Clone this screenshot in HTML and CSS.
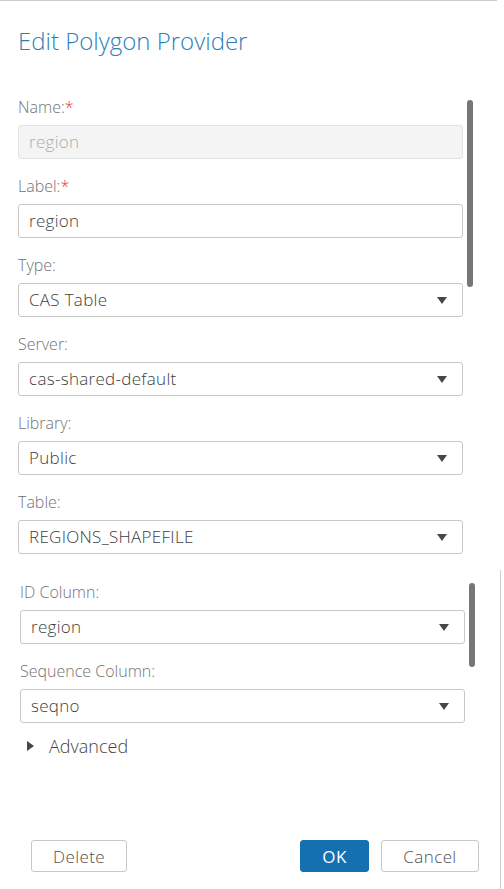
FILE: index.html
```html
<!DOCTYPE html>
<html>
<head>
<meta charset="utf-8">
<link rel="stylesheet" href="styles.css">
</head>
<body>
<div class="dialog">
  <h1 class="title">Edit Polygon Provider</h1>
  <div class="scroll-area">
    <div class="fields">
      <div class="field">
        <div class="label">Name:<span class="req">*</span></div>
        <div class="input disabled">region</div>
      </div>
      <div class="field">
        <div class="label">Label:<span class="req">*</span></div>
        <div class="input">region</div>
      </div>
      <div class="field">
        <div class="label">Type:</div>
        <div class="input select"><span>CAS Table</span><span class="arrow"></span></div>
      </div>
      <div class="field">
        <div class="label">Server:</div>
        <div class="input select"><span>cas-shared-default</span><span class="arrow"></span></div>
      </div>
      <div class="field">
        <div class="label">Library:</div>
        <div class="input select"><span>Public</span><span class="arrow"></span></div>
      </div>
      <div class="field last">
        <div class="label">Table:</div>
        <div class="input select"><span>REGIONS_SHAPEFILE</span><span class="arrow"></span></div>
      </div>
    </div>
    <div class="track"><div class="thumb thumb-main"></div></div>
  </div>
  <div class="lower">
    <div class="sub-panel">
      <div class="fields">
        <div class="field">
          <div class="label">ID Column:</div>
          <div class="input select"><span>region</span><span class="arrow"></span></div>
        </div>
        <div class="field last">
          <div class="label">Sequence Column:</div>
          <div class="input select"><span>seqno</span><span class="arrow"></span></div>
        </div>
        <div class="advanced"><span class="caret"></span><span>Advanced</span></div>
      </div>
      <div class="track"><div class="thumb thumb-sub"></div></div>
    </div>
    <div class="footer">
      <button class="btn">Delete</button>
      <div class="spacer"></div>
      <button class="btn primary">OK</button>
      <button class="btn">Cancel</button>
    </div>
  </div>
</div>
</body>
</html>
```

FILE: styles.css
```css
html, body {
  margin: 0;
  padding: 0;
  background: #ffffff;
}
body {
  font-family: "Open Sans", Lato, sans-serif;
  font-weight: 300;
  color: #4a4a4a;
}
.dialog {
  width: 501px;
  height: 889px;
  box-sizing: border-box;
  display: flex;
  flex-direction: column;
}
.title {
  margin: 0;
  padding: 25px 0 0 18px;
  border-top: 1px solid #cccccc;
  width: 479px;
  font-size: 24px;
  line-height: 30px;
  font-weight: 300;
  color: #2d7fba;
  height: 71px;
}
.scroll-area {
  display: flex;
  padding-left: 18px;
  height: 463px;
}
.fields {
  width: 445px;
}
.field {
  margin-bottom: 17px;
}
.field.last {
  margin-bottom: 0;
}
.label {
  font-size: 16px;
  line-height: 20px;
  margin-bottom: 8px;
  color: #737373;
}
.req {
  color: #e0344f;
}
.input {
  box-sizing: border-box;
  height: 34px;
  border: 1px solid #c8c8c8;
  border-radius: 3px;
  padding: 0 15px 0 10px;
  font-size: 17px;
  letter-spacing: 0.3px;
  line-height: 32px;
  color: #404040;
  background: #ffffff;
}
.input.disabled {
  background: #f4f4f4;
  border-color: #e2e2e2;
  color: #ababab;
}
.select {
  display: flex;
  align-items: center;
  justify-content: space-between;
}
.arrow {
  width: 0;
  height: 0;
  border-left: 5px solid transparent;
  border-right: 5px solid transparent;
  border-top: 7px solid #474747;
}
.track {
  width: 6px;
  margin-left: 4px;
}
.thumb {
  width: 6px;
  background: #767676;
  border-radius: 3px;
}
.thumb-main {
  margin-top: 3px;
  height: 187px;
}
.lower {
  flex: 1;
  display: flex;
  flex-direction: column;
  border-right: 1px solid #d0d0d0;
  margin-top: 10px;
}
.sub-panel {
  display: flex;
  padding: 12px 0 0 20px;
}
.thumb-sub {
  margin-top: 1px;
  height: 84px;
}
.advanced {
  display: flex;
  align-items: center;
  margin-top: 11px;
  height: 24px;
  font-size: 18px;
  color: #454545;
}
.caret {
  width: 0;
  height: 0;
  border-top: 5px solid transparent;
  border-bottom: 5px solid transparent;
  border-left: 7px solid #474747;
  margin: 0 15px 0 7px;
}
.footer {
  margin-top: auto;
  display: flex;
  align-items: center;
  padding: 0 21px 17px 31px;
}
.spacer {
  flex: 1;
}
.btn {
  font-family: "Open Sans", Lato, sans-serif;
  font-weight: 300;
  font-size: 17px;
  letter-spacing: 0.4px;
  height: 32px;
  border: 1px solid #c8c8c8;
  border-radius: 3px;
  background: #ffffff;
  color: #505050;
  padding: 0;
  width: 96px;
}
.btn.primary {
  width: 69px;
  background: #1470b0;
  border-color: #1470b0;
  color: #ffffff;
  font-weight: 400;
  margin-right: 12px;
}
.footer .btn:last-child {
  width: 98px;
}
```
